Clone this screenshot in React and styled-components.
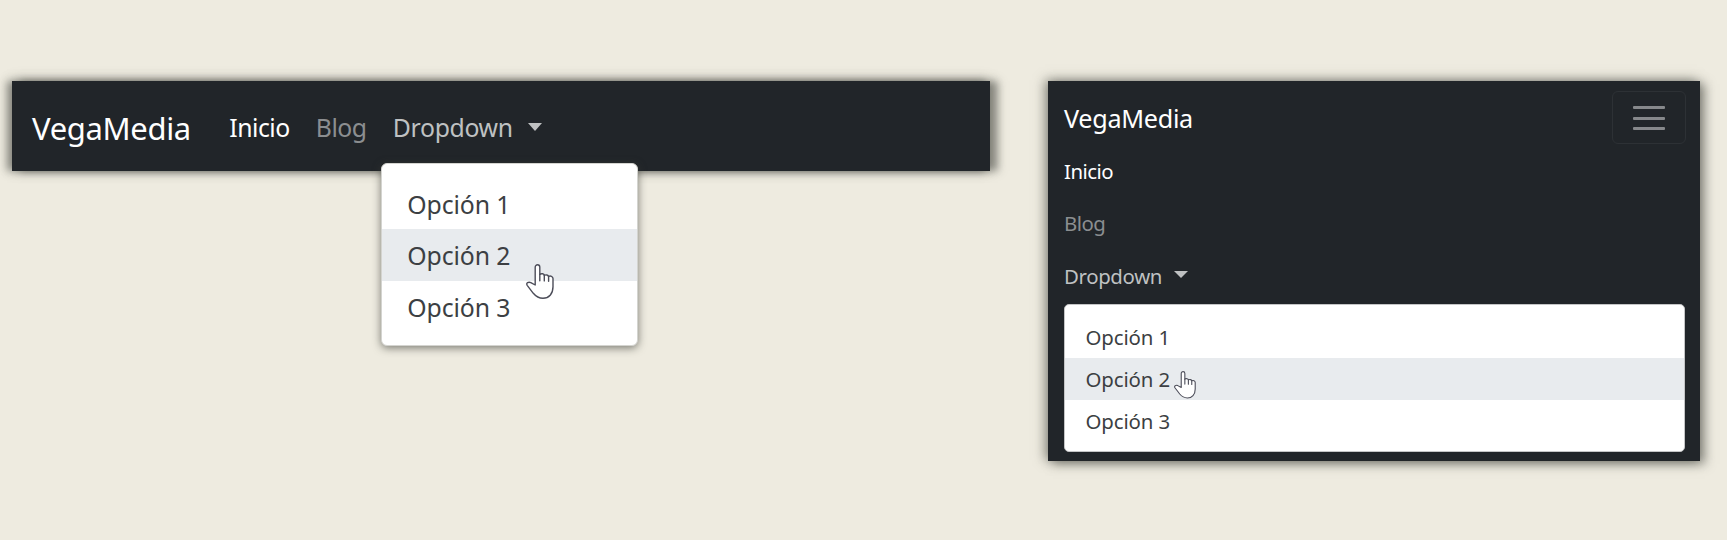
import React from "react";
import styled, { createGlobalStyle } from "styled-components";

const GlobalStyle = createGlobalStyle`
  *, *::before, *::after { box-sizing: border-box; }
  body {
    margin: 0;
    background: #eeebe0;
    font-family: "Noto Sans", "Open Sans", sans-serif;
  }
`;

const Page = styled.main`
  display: flex;
  align-items: flex-start;
  gap: 58px;
  height: 540px;
  padding: 81px 27px 0 12px;
  overflow: hidden;
`;

const WideNavbar = styled.nav`
  display: flex;
  align-items: center;
  width: 978px;
  height: 90px;
  padding: 4px 20px 0 20px;
  background: #212529;
  box-shadow:
    -5px 0 8px rgba(60, 62, 55, 0.5),
    8px 0 8px rgba(60, 62, 55, 0.5),
    0 -1px 12px rgba(60, 62, 55, 0.25);
`;

const NarrowNavbar = styled.nav`
  display: flex;
  flex-direction: column;
  width: 652px;
  height: 380px;
  padding: 10px 14px 8px 16px;
  background: #212529;
  box-shadow:
    -3px -1px 11px rgba(60, 62, 55, 0.55),
    5px 3px 10px rgba(60, 62, 55, 0.5);
`;

const Brand = styled.a`
  color: #fff;
  font-size: ${(p) => (p.$large ? "31px" : "25.2px")};
  letter-spacing: ${(p) => p.$spacing}px;
  line-height: 1.5;
  white-space: nowrap;
`;

const linkColors = { active: "#fff", muted: "#8b8e90", open: "#bfc1c2" };

const NavLink = styled.a`
  display: flex;
  align-items: center;
  color: ${(p) => linkColors[p.$state]};
  font-size: ${(p) => (p.$large ? "24.8px" : "20.4px")};
  letter-spacing: ${(p) => p.$spacing}px;
  line-height: 1.5;
  white-space: nowrap;
`;

const WideLinks = styled.div`
  display: flex;
  align-items: center;
  margin-left: 38.5px;
`;

const WideItem = styled.div`
  position: relative;
  width: ${(p) => p.$width}px;
`;

const NarrowHeader = styled.div`
  display: flex;
  align-items: flex-start;
  justify-content: space-between;
  height: 54px;

  ${Brand} {
    padding-top: 9px;
  }
`;

const StackedLinks = styled.div`
  display: flex;
  flex-direction: column;
  margin-bottom: 2px;
`;

const StackedItem = styled.div`
  display: flex;
  align-items: center;
  height: 52.4px;
`;

const Caret = styled.span`
  width: 0;
  height: 0;
  margin-left: ${(p) => (p.$large ? "15px" : "12px")};
  margin-top: ${(p) => (p.$large ? "-3px" : "-2px")};
  border-top: ${(p) => (p.$large ? "8px" : "7px")} solid currentColor;
  border-left: ${(p) => (p.$large ? "7.5px" : "7px")} solid transparent;
  border-right: ${(p) => (p.$large ? "7.5px" : "7px")} solid transparent;
`;

const Toggler = styled.button`
  display: flex;
  flex-direction: column;
  align-items: center;
  justify-content: center;
  gap: 7.5px;
  width: 74px;
  height: 53px;
  padding: 1px 0 0;
  border: 1.5px solid #2d3135;
  border-radius: 6px;
  background: transparent;
`;

const TogglerLine = styled.span`
  width: 31.5px;
  height: 3px;
  border-radius: 1px;
  background: #86888b;
`;

const FloatingMenu = styled.div`
  position: absolute;
  top: 54px;
  left: -12px;
  z-index: 1;
  width: 257px;
  height: 183px;
  padding: 13.5px 0;
  border: 1px solid #d4d4d0;
  border-radius: 6px;
  background: #fff;
  box-shadow: 0 2px 8px rgba(60, 62, 55, 0.65);
`;

const InlineMenu = styled.div`
  position: relative;
  width: 621px;
  height: 148px;
  flex-shrink: 0;
  padding: 11px 0;
  border: 1px solid #c4c5c6;
  border-radius: 5px;
  background: #fff;
`;

const Option = styled.div`
  display: flex;
  align-items: center;
  height: ${(p) => (p.$large ? "51.5px" : "42px")};
  padding-left: ${(p) => (p.$large ? "25.5px" : "20.5px")};
  background: ${(p) => (p.$hovered ? "#e8ebee" : "transparent")};
  color: #3c3f43;
  font-size: ${(p) => (p.$large ? "24.8px" : "20.4px")};
  letter-spacing: -0.1px;
  white-space: nowrap;
`;

const Pointer = styled.svg`
  position: absolute;
  top: ${(p) => p.$top}px;
  left: ${(p) => p.$left}px;
  width: ${(p) => p.$width}px;
  height: auto;
  overflow: visible;
`;

function HandPointer(props) {
  return (
    <Pointer viewBox="0 0 28 35" {...props}>
      <path
        d="M9.2 21V3.2C9.2 0 13.8 0 13.8 3.2V10.4C15.3 9.2 18 9.7 18.3 11.3C19.8 10.4 22.3 10.9 22.6 12.5C24.4 11.5 27 12.3 27 14.6V22.8C27 30 22.8 34.3 17 34.3C12.6 34.3 9.8 32.3 7.3 29.3L1.2 21.3C-0.4 18.9 2.6 17.6 4.8 18.6Z"
        fill="#fff"
        stroke="#4c4d59"
        strokeWidth="1.4"
        strokeLinejoin="round"
      />
      <path
        d="M13.8 10.4V16.7M18.3 11.3V16.9M22.6 12.5V17.2"
        fill="none"
        stroke="#4c4d59"
        strokeWidth="1.4"
        strokeLinecap="round"
      />
    </Pointer>
  );
}

const options = ["Opción 1", "Opción 2", "Opción 3"];

function Options({ large }) {
  return options.map((label, i) => (
    <Option key={label} $large={large} $hovered={i === 1}>
      {label}
    </Option>
  ));
}

export default function App() {
  return (
    <>
      <GlobalStyle />
      <Page>
        <WideNavbar>
          <Brand $large $spacing={-0.35}>VegaMedia</Brand>
          <WideLinks>
            <WideItem $width={86.5}>
              <NavLink $large $state="active" $spacing={-0.5}>Inicio</NavLink>
            </WideItem>
            <WideItem $width={77}>
              <NavLink $large $state="muted" $spacing={-0.5}>Blog</NavLink>
            </WideItem>
            <WideItem $width={152}>
              <NavLink $large $state="open" $spacing={-0.35}>
                Dropdown
                <Caret $large />
              </NavLink>
              <FloatingMenu>
                <Options large />
                <HandPointer $top={100} $left={144} $width={28} />
              </FloatingMenu>
            </WideItem>
          </WideLinks>
        </WideNavbar>

        <NarrowNavbar>
          <NarrowHeader>
            <Brand $spacing={-0.3}>VegaMedia</Brand>
            <Toggler aria-label="Menu">
              <TogglerLine />
              <TogglerLine />
              <TogglerLine />
            </Toggler>
          </NarrowHeader>
          <StackedLinks>
            <StackedItem>
              <NavLink $state="active" $spacing={-0.5}>Inicio</NavLink>
            </StackedItem>
            <StackedItem>
              <NavLink $state="muted" $spacing={-0.5}>Blog</NavLink>
            </StackedItem>
            <StackedItem>
              <NavLink $state="open" $spacing={-0.35}>
                Dropdown
                <Caret />
              </NavLink>
            </StackedItem>
          </StackedLinks>
          <InlineMenu>
            <Options />
            <HandPointer $top={66} $left={109} $width={22} />
          </InlineMenu>
        </NarrowNavbar>
      </Page>
    </>
  );
}
